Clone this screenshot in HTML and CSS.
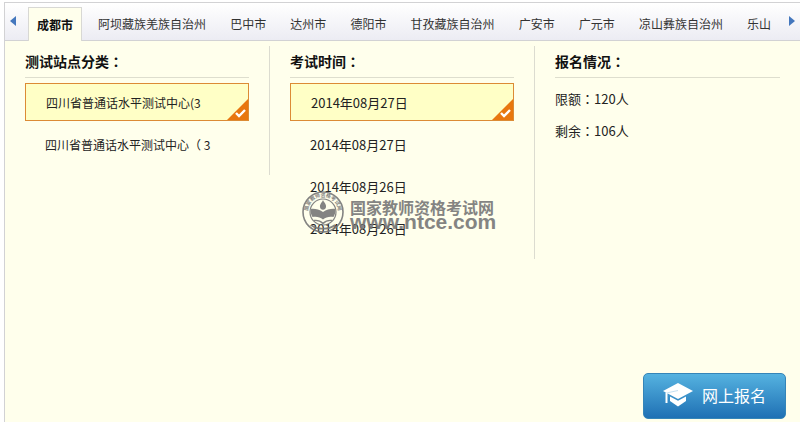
FILE: index.html
```
<!DOCTYPE html>
<html lang="zh-CN">
<head>
  <meta charset="UTF-8">
  <meta name="viewport" content="width=device-width, initial-scale=1.0">
  <title>网上报名</title>
  <link rel="stylesheet" href="styles.css">
</head>
<body>
  <div class="panel">
    <!-- 城市选项卡 -->
    <nav class="tabbar">
      <button class="arrow" type="button" aria-label="向左">
        <svg width="8" height="12" viewBox="0 0 8 12"><path d="M7 1v10L1 6z" fill="#4477bd"/></svg>
      </button>
      <div class="tabs">
        <a class="tab active" href="#">成都市</a>
        <a class="tab" href="#">阿坝藏族羌族自治州</a>
        <a class="tab" href="#">巴中市</a>
        <a class="tab" href="#">达州市</a>
        <a class="tab" href="#">德阳市</a>
        <a class="tab" href="#">甘孜藏族自治州</a>
        <a class="tab" href="#">广安市</a>
        <a class="tab" href="#">广元市</a>
        <a class="tab" href="#">凉山彝族自治州</a>
        <a class="tab" href="#">乐山</a>
      </div>
      <button class="arrow" type="button" aria-label="向右">
        <svg width="8" height="12" viewBox="0 0 8 12"><path d="M1 1v10l6-5z" fill="#4477bd"/></svg>
      </button>
    </nav>

    <div class="columns">
      <section class="column">
        <h2>测试站点分类<span class="colon" lang="zh-TW">：</span></h2>
        <div class="options">
          <button class="option selected" type="button">四川省普通话水平测试中心(3
            <svg class="check" width="21" height="21" viewBox="0 0 21 21"><path d="M21 0v21H0z" fill="#e8770f"/><path d="M9 14l3 3 6-6" fill="none" stroke="#fff" stroke-width="2.4"/></svg>
          </button>
          <button class="option" type="button">四川省普通话水平测试中心（ 3</button>
        </div>
      </section>

      <section class="column">
        <h2>考试时间<span class="colon" lang="zh-TW">：</span></h2>
        <div class="options dates">
          <button class="option selected" type="button">2014年08月27日
            <svg class="check" width="21" height="21" viewBox="0 0 21 21"><path d="M21 0v21H0z" fill="#e8770f"/><path d="M9 14l3 3 6-6" fill="none" stroke="#fff" stroke-width="2.4"/></svg>
          </button>
          <button class="option" type="button">2014年08月27日</button>
          <button class="option" type="button">2014年08月26日</button>
          <button class="option" type="button">2014年08月26日</button>
        </div>
        <!-- 水印 -->
        <div class="watermark">
          <svg width="42" height="42" viewBox="0 0 42 42">
            <defs><path id="ring" d="M7.6 27.5A15 15 0 1 1 34.4 27.5"/></defs>
            <circle cx="21" cy="21" r="20" fill="none" stroke="#777" stroke-width="1.6"/>
            <text class="ring-text"><textPath href="#ring" startOffset="50%">国家教师资格考试网</textPath></text>
            <circle cx="21" cy="21" r="13" fill="none" stroke="#777" stroke-width="1.2"/>
            <path d="M8.500 18c4-.6 8.500.4 12.500 3 4-2.600 8.500-3.600 12.500-3 .2 3-.5 5.500-2 8-4-.8-7.500 0-10.500 2.500-3-2.500-6.500-3.300-10.500-2.500-1.500-2.500-2.200-5-2-8z" fill="#777"/>
            <path d="M21 9c1 2.500 3.500 4 3 7-.3 1.800-1.500 2.700-3 2.700s-2.800-.9-3-2.700c-.4-3 2-4.500 3-7z" fill="#777"/>
            <path d="M12 29.500c3.500-.5 6.500.5 9 3 2.500-2.500 5.500-3.500 9-3" fill="none" stroke="#777" stroke-width="1.400"/>
            <path d="M9 34c6.500 5 17.500 5 24 0" fill="none" stroke="#777" stroke-width="1.600"/>
          </svg>
          <div class="brand">
            <span class="brand-name">国家教师资格考试网</span>
            <span class="brand-url">www.ntce.com</span>
          </div>
        </div>
      </section>

      <section class="column">
        <h2>报名情况<span class="colon" lang="zh-TW">：</span></h2>
        <p>限额<span class="colon" lang="zh-TW">：</span>120人</p>
        <p>剩余<span class="colon" lang="zh-TW">：</span>106人</p>
      </section>
    </div>

    <div class="actions">
      <button class="signup" type="button">
        <svg width="30" height="24" viewBox="0 0 30 24">
          <path d="M15 0l15 8-15 8L0 8z" fill="#fff"/>
          <path d="M7 13.500l8 4.300 8-4.300v4.500l-8 5.500-8-5.500z" fill="#fff"/>
          <path d="M15 7.500L3.500 10v10" fill="none" stroke="#c4e0f2" stroke-width="1"/>
          <path d="M2.500 9.500h2V20h-2z" fill="#fff"/>
        </svg>
        网上报名
      </button>
    </div>
  </div>
</body>
</html>
```
FILE: styles.css
```
* {
  box-sizing: border-box;
}
body {
  margin: 0;
  padding: 2px 0 0 4px;
  min-height: 100vh;
  display: flex;
  background: #fff;
  color: #222;
  font-family: "Noto Sans CJK SC", sans-serif;
  font-size: 12px;
}
button {
  font-family: inherit;
  font-size: inherit;
  color: inherit;
  border: none;
  background: none;
  cursor: pointer;
}
.panel {
  flex: 1;
  display: flex;
  flex-direction: column;
  border-top: 1px solid #d2d2d4;
  border-left: 1px solid #d2d2d4;
  background: #ffffec;
}

/* 选项卡 */
.tabbar {
  display: flex;
  height: 38px;
  border-bottom: 1px solid #d2d2d4;
  background: linear-gradient(#fff, #ececf3);
}
.arrow {
  padding: 0 4px 2px;
  line-height: 0;
}
.tabs {
  flex: 1;
  display: flex;
  justify-content: space-between;
  align-items: flex-end;
  padding: 0 5px 0 7px;
}
.tab {
  height: 33px;
  padding: 0 8px;
  line-height: 33px;
  color: #333;
  text-decoration: none;
  white-space: nowrap;
}
.tab.active {
  height: 34px;
  margin-bottom: -1px;
  border: 1px solid #d8d8d4;
  border-bottom: none;
  background: #ffffec;
  color: #111;
  font-weight: bold;
}

/* 三列内容 */
.columns {
  display: grid;
  grid-template-columns: repeat(3, 1fr);
  align-items: start;
  padding-top: 5px;
}
.column {
  position: relative;
  padding: 0 20px 12px;
  border-right: 1px solid #dcdcd0;
}
.column:last-child {
  border-right: none;
}
h2 {
  margin: 0 0 5px;
  height: 32px;
  line-height: 31px;
  border-bottom: 1px solid #dedece;
  color: #111;
  font-size: 14px;
}
p {
  margin: 0;
  line-height: 32px;
  font-size: 13px;
}
/* 居中的冒号 */
.colon {
  font-family: "Noto Sans CJK TC", sans-serif;
}
.options {
  display: flex;
  flex-direction: column;
  gap: 4px;
}
.dates {
  font-size: 13px;
}
.option {
  position: relative;
  height: 38px;
  padding: 0 20px;
  text-align: left;
}
.option.selected {
  border: 1px solid #dc8b35;
  background: #ffffc6;
}
.check {
  position: absolute;
  right: 0;
  bottom: 0;
}

/* 水印盖在日期上面 */
.watermark {
  position: absolute;
  left: 32px;
  top: 145px;
  display: flex;
  gap: 6px;
  opacity: 0.9;
  pointer-events: none;
}
.ring-text {
  fill: #777;
  font-size: 5px;
  font-weight: bold;
  text-anchor: middle;
}
.brand {
  display: flex;
  flex-direction: column;
  color: #777;
  font-weight: bold;
  white-space: nowrap;
}
.brand-name {
  margin-top: 8px;
  font-size: 16px;
  line-height: 16px;
}
.brand-url {
  font-family: "Liberation Sans", Arial, sans-serif;
  font-size: 21px;
  line-height: 14px;
}

/* 报名按钮 */
.actions {
  display: flex;
  justify-content: flex-end;
  margin-top: auto;
  padding: 0 14px 3px;
}
.signup {
  display: flex;
  align-items: center;
  gap: 9px;
  height: 46px;
  padding: 0 19px 2px;
  border: 1px solid #3585b8;
  border-radius: 5px;
  background: linear-gradient(#55b2e0, #1f70b4);
  color: #fff;
  font-size: 16px;
}
```
